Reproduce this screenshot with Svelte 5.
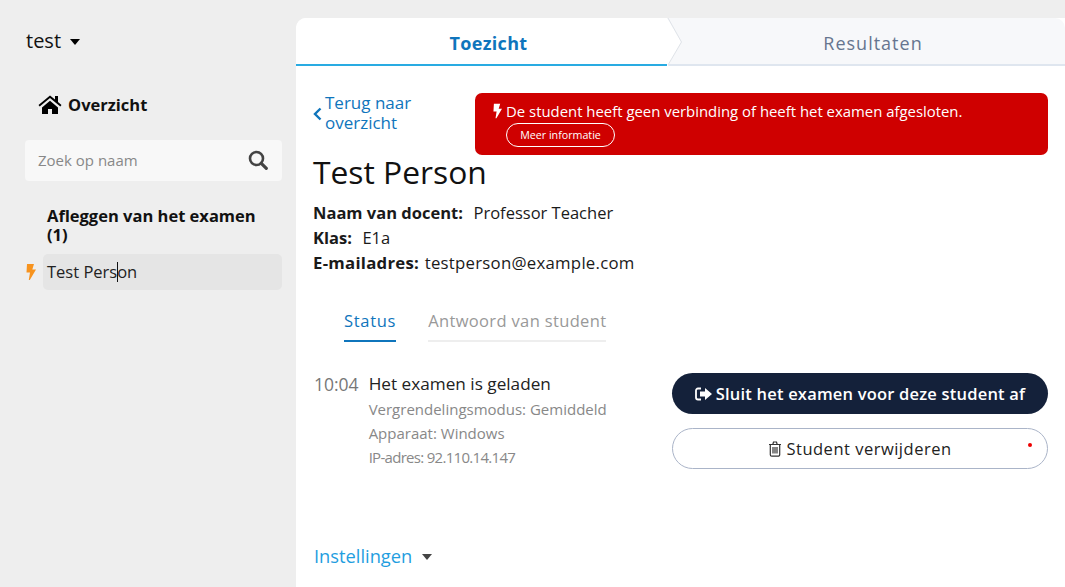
<script>
  const details = ['Vergrendelingsmodus: Gemiddeld', 'Apparaat: Windows', 'IP-adres: 92.110.14.147'];
</script>

<div class="page">
  <aside class="sidebar">
    <div class="account">test <span class="caret"></span></div>
    <a class="home" href="#home">
      <svg width="24" height="20" viewBox="0 0 24 20"><path fill="#000" d="M12 1.500 0.500 11l1.200 1.500L12 4l10.300 8.500 1.200-1.500-3.500-2.900V2h-3v3.600zM4 13.500V20h6v-5h4v5h6v-6.500L12 6.800z"/></svg>
      Overzicht
    </a>
    <div class="search">
      <span>Zoek op naam</span>
      <svg width="20" height="20" viewBox="0 0 20 20"><circle cx="8.500" cy="8.500" r="6.500" fill="none" stroke="#444" stroke-width="2.600"/><path d="m13.300 13.300 5 5" stroke="#444" stroke-width="3.200" stroke-linecap="round"/></svg>
    </div>
    <h2>Afleggen van het examen (1)</h2>
    <div class="student-row">
      <svg class="bolt" width="10" height="16" viewBox="0 0 10 16"><path fill="#f7931e" d="M1 0h7L6.300 5.500H10L3.800 16H2.800L4 8.500H0.500z"/></svg>
      <div class="student">Test Pers<span class="cursor"></span>on</div>
    </div>
  </aside>

  <main class="main">
    <nav class="tabs">
      <div class="tab active">Toezicht</div>
      <div class="tab">Resultaten</div>
      <svg class="chevron" width="16" height="48" viewBox="0 0 16 48"><path d="M0 0 L14 24 L1 48 L0 48Z" fill="#fff"/><path d="M1 0 L14.500 24 L1 47" fill="none" stroke="#dfe3e8" stroke-width="1"/></svg>
    </nav>

    <section class="content">
      <div class="top">
        <a class="back" href="#back">
          <svg width="9" height="14" viewBox="0 0 9 14"><path d="M7.500 1.500 2 7l5.500 5.500" fill="none" stroke="#0f75bc" stroke-width="2.400"/></svg>
          <span>Terug naar overzicht</span>
        </a>
        <div class="alert">
          <div class="alert-line">
            <svg width="9" height="16" viewBox="0 0 10 16"><path fill="#fff" d="M1 0h7L6.300 5.500H10L3.800 16H2.800L4 8.500H0.500z"/></svg>
            De student heeft geen verbinding of heeft het examen afgesloten.
          </div>
          <button class="more">Meer informatie</button>
        </div>
      </div>

      <h1>Test Person</h1>
      <div class="metas">
        <p class="meta"><b>Naam van docent:</b>&nbsp; Professor Teacher</p>
        <p class="meta"><b>Klas:</b>&nbsp; E1a</p>
        <p class="meta email"><b>E-mailadres:</b> testperson@example.com</p>
      </div>

      <div class="subtabs">
        <div class="subtab active">Status</div>
        <div class="subtab">Antwoord van student</div>
      </div>

      <div class="status">
        <div class="log">
          <span class="time">10:04</span>
          <div>
            <div class="event">Het examen is geladen</div>
            {#each details as line}
              <div class="detail">{line}</div>
            {/each}
          </div>
        </div>
        <div class="actions">
          <button class="btn dark">
            <svg width="17" height="14" viewBox="0 0 17 14"><path fill="none" stroke="#fff" stroke-width="1.800" d="M6 1.500H3A2 2 0 0 0 1 3.500v7a2 2 0 0 0 2 2h3"/><path fill="#fff" d="M10 1l7 6-7 6V9.500H5v-5h5z"/></svg>
            Sluit het examen voor deze student af
          </button>
          <button class="btn outline">
            <svg width="14" height="16" viewBox="0 0 14 16"><path fill="none" stroke="#333" stroke-width="1.200" d="M1 3.500h12M2.300 3.500v10.200a1.500 1.500 0 0 0 1.500 1.500h6.400a1.500 1.500 0 0 0 1.500-1.500V3.500M4.800 3.500 5.500 1h3l.7 2.500M5 6v6.500M7 6v6.500M9 6v6.500"/></svg>
            Student verwijderen
            <span class="dot"></span>
          </button>
        </div>
      </div>

      <div class="settings">Instellingen <span class="caret grey"></span></div>
    </section>
  </main>
</div>

<style>
  :global(body) {
    margin: 0;
    background: #eee;
  }

  .page {
    display: flex;
    width: 1065px;
    height: 587px;
    overflow: hidden;
    font-family: "Open Sans", sans-serif;
    color: #1a1a1a;
    background: #eee;
  }

  .sidebar {
    width: 296px;
    flex: none;
    box-sizing: border-box;
    padding: 29px 14px 0 25px;
  }

  .account {
    font-size: 20px;
    line-height: 24px;
    margin-left: 1px;
    color: #111;
  }

  .caret {
    display: inline-block;
    width: 0;
    height: 0;
    margin-left: 4px;
    vertical-align: 3px;
    border-left: 5.500px solid transparent;
    border-right: 5.500px solid transparent;
    border-top: 6px solid #000;
  }

  .caret.grey {
    border-top-color: #444;
    margin-left: 5px;
  }

  .home {
    display: flex;
    align-items: center;
    gap: 6px;
    margin: 39px 0 0 13px;
    height: 24px;
    font-size: 16.500px;
    font-weight: 700;
    color: #111;
    text-decoration: none;
  }

  .search {
    display: flex;
    align-items: center;
    justify-content: space-between;
    box-sizing: border-box;
    height: 41px;
    margin-top: 24px;
    padding: 0 14px 2px 13px;
    background: #f8f8f8;
    border-radius: 4px;
    font-size: 15px;
    color: #888;
  }

  h2 {
    width: 230px;
    margin: 25px 0 0 22px;
    font-size: 16.500px;
    line-height: 19px;
    font-weight: 700;
    color: #111;
  }

  .student-row {
    display: flex;
    align-items: center;
    gap: 7px;
    margin-top: 10px;
    margin-left: 1px;
  }

  .bolt {
    flex: none;
  }

  .student {
    flex: 1;
    height: 36px;
    box-sizing: border-box;
    padding-left: 4px;
    line-height: 35px;
    font-size: 16.500px;
    background: #e5e5e5;
    border-radius: 5px;
    color: #222;
  }

  .cursor {
    display: inline-block;
    width: 1px;
    height: 20px;
    margin-right: -1px;
    vertical-align: -4px;
    background: #111;
  }

  .main {
    flex: 1;
    margin-top: 18px;
    background: #fff;
    border-radius: 10px 0 0 0;
  }

  .tabs {
    display: flex;
    position: relative;
    height: 48px;
  }

  .tab {
    box-sizing: border-box;
    height: 48px;
    padding-left: 14px;
    font-size: 18px;
    line-height: 50px;
    text-align: center;
    color: #66758f;
    background: #f7f8fa;
    border-bottom: 2px solid #dfe6ef;
    border-radius: 0 10px 0 0;
    flex: 1;
    font-weight: 500;
    letter-spacing: 1px;
  }

  .tab.active {
    flex: none;
    width: 371px;
    color: #0f75bc;
    font-weight: 700;
    letter-spacing: 0.3px;
    background: #fff;
    border-bottom-color: #29abe2;
    border-radius: 10px 0 0 0;
  }

  .chevron {
    position: absolute;
    left: 371px;
    top: 0;
  }

  .content {
    padding: 27px 17px 0 17px;
  }

  .top {
    display: flex;
    height: 62px;
  }

  .back {
    display: flex;
    align-items: flex-start;
    gap: 3px;
    width: 162px;
    flex: none;
    font-size: 17px;
    line-height: 20px;
    color: #0f75bc;
    text-decoration: none;
  }

  .back svg {
    margin-top: 14px;
  }

  .back span {
    width: 120px;
  }

  .alert {
    flex: 1;
    box-sizing: border-box;
    padding: 8px 18px;
    background: #cf0000;
    border-radius: 7px;
    color: #fff;
    font-size: 14.900px;
    line-height: 20px;
  }

  .alert-line {
    display: flex;
    align-items: center;
    gap: 4px;
  }

  .more {
    display: block;
    width: 109px;
    height: 24px;
    margin: 2px 0 0 13px;
    padding: 0;
    background: none;
    border: 1px solid #fff;
    border-radius: 12px;
    color: #fff;
    font: inherit;
    font-size: 10.700px;
  }

  h1 {
    margin: 0;
    font-size: 31.800px;
    line-height: 34px;
    font-weight: 500;
    color: #111;
  }

  .metas {
    margin-top: 11px;
  }

  .meta {
    margin: 0;
    font-size: 16.500px;
    line-height: 25px;
    color: #1a1a1a;
  }

  .meta b {
    margin-right: 2px;
  }

  .meta.email {
    font-size: 16.800px;
    letter-spacing: 0.25px;
  }

  .meta.email b {
    margin-right: 1px;
  }

  .subtabs {
    display: flex;
    gap: 32px;
    margin: 33px 0 0 31px;
  }

  .subtab {
    height: 34px;
    box-sizing: border-box;
    border-bottom: 2px solid #eee;
    font-size: 16.500px;
    line-height: 26px;
    letter-spacing: 0.35px;
    color: #999;
  }

  .subtab.active {
    color: #0f75bc;
    letter-spacing: 0.7px;
    border-bottom-color: #0f75bc;
  }

  .status {
    display: flex;
    justify-content: space-between;
    margin-top: 29px;
  }

  .log {
    display: flex;
    gap: 10px;
    margin-left: 1px;
  }

  .time {
    font-size: 17.500px;
    line-height: 26px;
    color: #777;
  }

  .event {
    font-size: 17.200px;
    line-height: 26px;
    color: #222;
  }

  .detail {
    font-size: 15px;
    line-height: 24px;
    color: #888;
  }

  .detail:last-child {
    letter-spacing: -0.7px;
  }

  .actions {
    display: flex;
    flex-direction: column;
    gap: 14px;
    width: 376px;
    margin-top: 2px;
  }

  .btn {
    display: flex;
    align-items: center;
    justify-content: center;
    gap: 4px;
    position: relative;
    height: 41px;
    border-radius: 21px;
    font-family: inherit;
    font-size: 16.500px;
    padding: 0;
  }

  .dark {
    background: #14213a;
    border: none;
    color: #fff;
    font-weight: 600;
    letter-spacing: 0.2px;
  }

  .outline {
    background: #fff;
    border: 1px solid #aab4c8;
    color: #222;
    font-weight: 500;
    letter-spacing: 0.5px;
  }

  .dot {
    position: absolute;
    top: 14px;
    right: 15px;
    width: 4px;
    height: 4px;
    border-radius: 50%;
    background: #e00;
  }

  .settings {
    margin-top: 75px;
    margin-left: 1px;
    font-size: 18.300px;
    line-height: 24px;
    color: #1f9ee0;
  }
</style>
